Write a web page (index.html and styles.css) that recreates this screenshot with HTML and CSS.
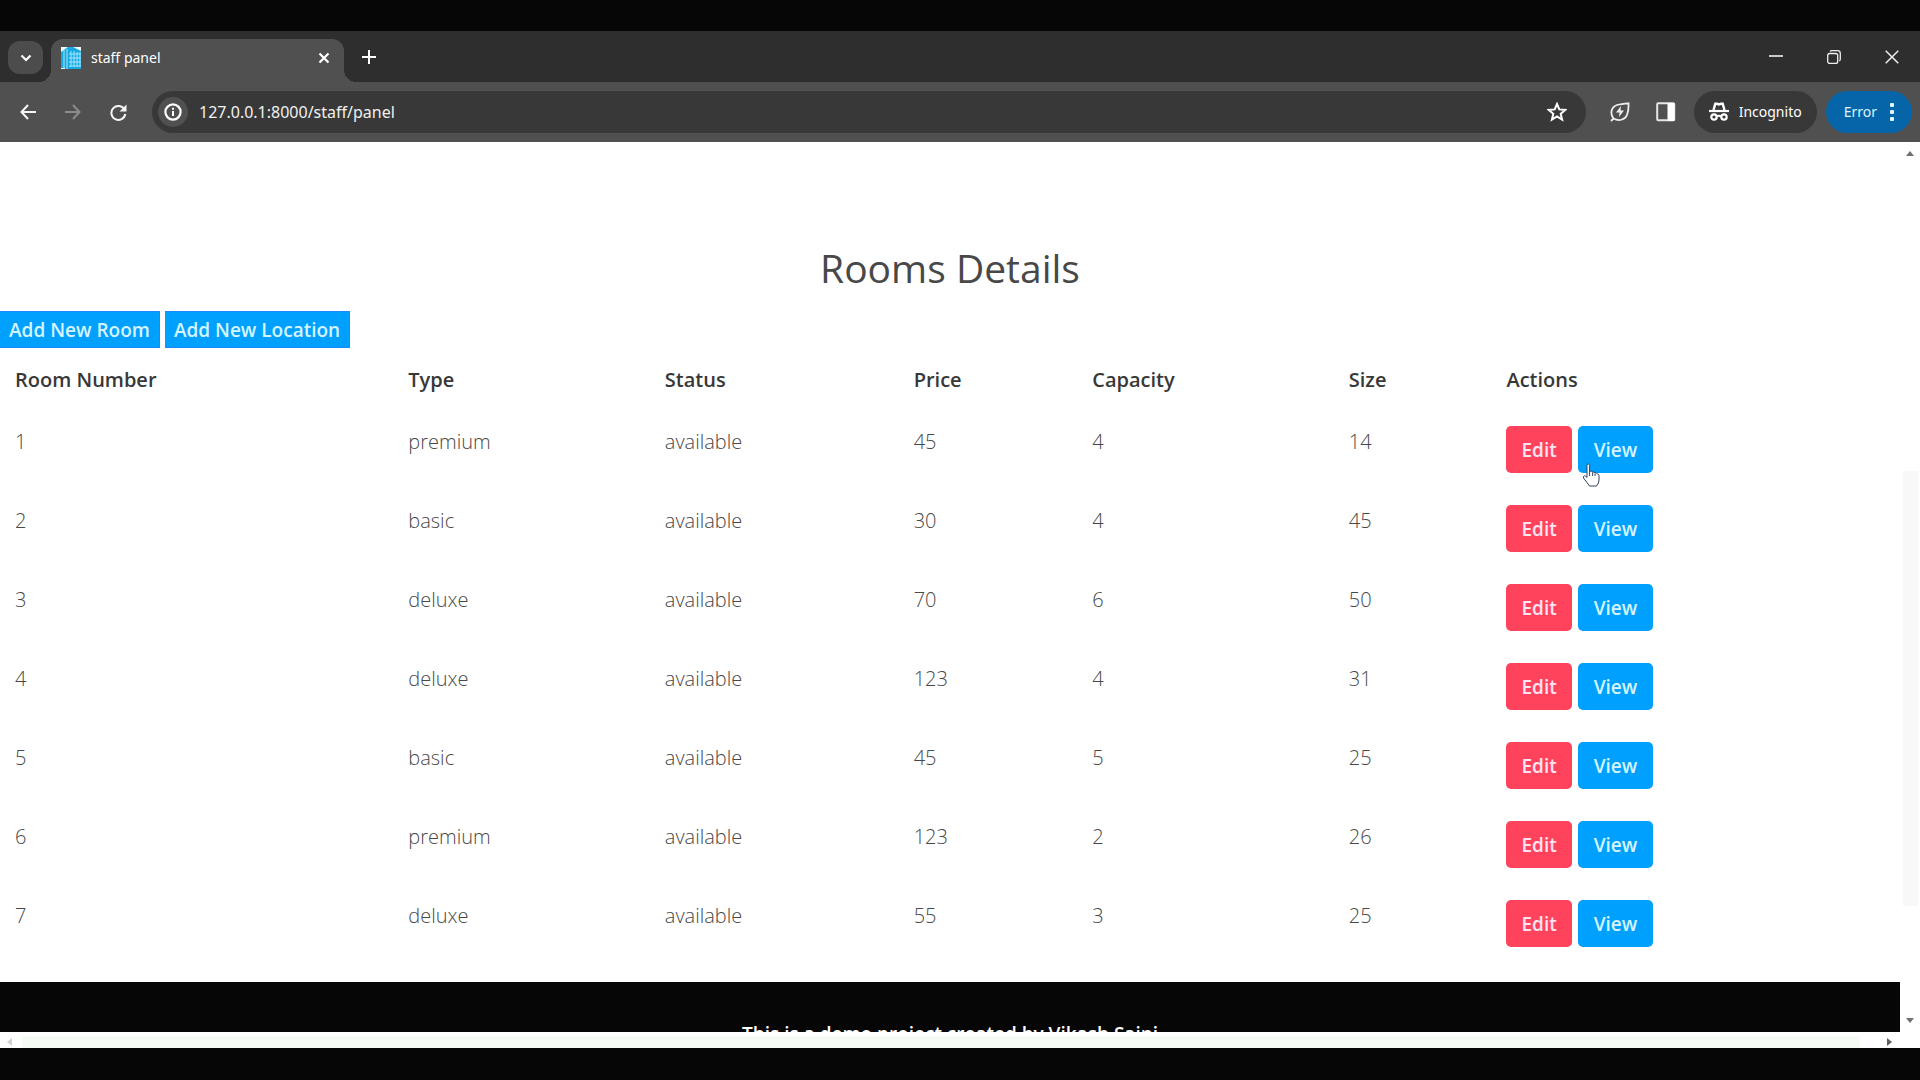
FILE: index.html
```html
<!DOCTYPE html>
<html lang="en">
<head>
<meta charset="utf-8">
<title>staff panel</title>
<link rel="stylesheet" href="styles.css">
</head>
<body>
<div class="window">
  <header class="chrome">
    <div class="tabstrip">
      <button class="tab-search" aria-label="Search tabs"><svg width="12" height="12" viewBox="0 0 12 12"><path d="M1.500 3.500L6 8l4.500-4.500" fill="none" stroke="#fff" stroke-width="2.200"/></svg></button>
      <div class="tab">
        <svg width="20" height="22" viewBox="0 0 20 22"><rect width="20" height="22" fill="#19a9e2"/><path d="M0 0h7L0 5zM12 0h8v4zM0 21h4v1H0z" fill="#eefaff"/><path d="M3 3v18M6 2v20M10 4v16M13 4v16M16 5v15M19 5v15" stroke="#a5e8ff" stroke-width="1"/><path d="M8 7h12M8 11h12M8 15h12M8 19h12" stroke="#a5e8ff" stroke-width="1"/></svg>
        <span class="tab-title">staff panel</span>
        <button class="plain" aria-label="Close tab"><svg width="12" height="12" viewBox="0 0 12 12"><path d="M1.500 1.500l9 9M10.500 1.500l-9 9" stroke="#fff" stroke-width="2.200"/></svg></button>
      </div>
      <button class="plain new-tab" aria-label="New tab"><svg width="14" height="14" viewBox="0 0 14 14"><path d="M7 0v14M0 7h14" stroke="#fff" stroke-width="2"/></svg></button>
      <div class="window-controls">
        <button class="plain" aria-label="Minimize"><svg width="14" height="14" viewBox="0 0 14 14"><path d="M0 6h14" stroke="#fff" stroke-width="1.500"/></svg></button>
        <button class="plain" aria-label="Restore"><svg width="14" height="14" viewBox="0 0 14 14" fill="none" stroke="#eee" stroke-width="1.300"><rect x="0.700" y="3.500" width="10" height="10" rx="2"/><path d="M3 1.500Q3.500.7 5 .7h5.500q2.800 0 2.800 2.800V9q0 1.500-1 2"/></svg></button>
        <button class="plain" aria-label="Close"><svg width="14" height="14" viewBox="0 0 14 14"><path d="M.7.7l12.600 12.600M13.300.7L.7 13.300" stroke="#eee" stroke-width="1.500"/></svg></button>
      </div>
    </div>
    <div class="toolbar">
      <nav class="nav">
        <button class="plain" aria-label="Back"><svg width="16" height="16" viewBox="0 0 16 16"><path d="M16 8H2M8 1L1.500 8 8 15" fill="none" stroke="#f5f5f5" stroke-width="2"/></svg></button>
        <button class="plain" aria-label="Forward"><svg width="16" height="16" viewBox="0 0 16 16"><path d="M0 8h14M8 1l6.500 7L8 15" fill="none" stroke="#8c8c8c" stroke-width="2"/></svg></button>
        <button class="plain" aria-label="Reload"><svg width="17" height="17" viewBox="0 0 17 17"><path d="M14.500 5.500A7 7 0 1 0 15.300 10" fill="none" stroke="#f5f5f5" stroke-width="2"/><path d="M16.500.5v7h-7l2.500-2.500z" fill="#f5f5f5"/></svg></button>
      </nav>
      <div class="omnibox">
        <button class="site-info" aria-label="Site information"><svg width="18" height="18" viewBox="0 0 18 18"><circle cx="9" cy="9" r="7.600" fill="none" stroke="#fff" stroke-width="2.200"/><path d="M9 8v5M9 4.800v2" stroke="#fff" stroke-width="2"/></svg></button>
        <input class="url" aria-label="Address" value="127.0.0.1:8000/staff/panel">
        <button class="plain" aria-label="Bookmark"><svg width="20" height="20" viewBox="0 0 20 20"><path d="M10 2l2.300 5.400 5.900.5-4.500 3.900 1.400 5.800-5.100-3.100-5.100 3.100 1.400-5.800L1.800 7.900l5.900-.5z" fill="none" stroke="#fff" stroke-width="2"/></svg></button>
      </div>
      <div class="extras">
        <button class="plain" aria-label="Energy saver"><svg width="20" height="20" viewBox="0 0 20 20" fill="none" stroke="#eee" stroke-width="1.800"><path d="M3.500 16.500C-.5 11 1.500 5 7 3q4-1.200 11.500-1.700C18.800 7 18.200 10 17 13c-2 5-8.500 6.500-13.500 3.500zM1 19l3-3"/><path d="M11 4L6 10.500h3.500L9 15l5-6.500h-3.500z" fill="#eee" stroke="none"/></svg></button>
        <button class="plain" aria-label="Side panel"><svg width="20" height="20" viewBox="0 0 20 20"><rect x="1.200" y="1.200" width="17" height="17" rx="1" fill="none" stroke="#e6e6e6" stroke-width="2"/><path d="M11.500 1h7v18h-7z" fill="#fff"/></svg></button>
      </div>
      <button class="pill"><svg width="20" height="20" viewBox="0 0 20 20"><path d="M0 9h20" stroke="#fff" stroke-width="2.200"/><path d="M4.500 8L6.300 1.800H8L10 2.500l2-.7h1.700L15.500 8" fill="none" stroke="#fff" stroke-width="2.400"/><circle cx="5" cy="15" r="2.700" fill="none" stroke="#fff" stroke-width="2.200"/><circle cx="15" cy="15" r="2.700" fill="none" stroke="#fff" stroke-width="2.200"/><path d="M7.500 14.500q2.500-1.500 5 0" fill="none" stroke="#fff" stroke-width="2"/></svg>Incognito</button>
      <button class="pill pill-error">Error<svg width="4" height="18" viewBox="0 0 4 18" fill="#dff3ff"><rect width="4" height="4" rx="1"/><rect y="7" width="4" height="4" rx="1"/><rect y="14" width="4" height="4" rx="1"/></svg></button>
    </div>
  </header>

  <div class="viewport">
    <main class="page">
      <h1>Rooms Details</h1>
      <div class="add-actions">
        <button class="add">Add New Room</button>
        <button class="add">Add New Location</button>
      </div>
      <table class="rooms">
        <colgroup><col class="c-number"><col class="c-type"><col class="c-status"><col class="c-price"><col class="c-capacity"><col class="c-size"><col></colgroup>
        <thead><tr><th>Room Number</th><th>Type</th><th>Status</th><th>Price</th><th>Capacity</th><th>Size</th><th>Actions</th></tr></thead>
        <tbody>
          <tr><td>1</td><td>premium</td><td>available</td><td>45</td><td>4</td><td>14</td><td><div class="row-actions"><a class="btn edit" href="#">Edit</a><a class="btn view" href="#">View</a>
            <svg class="cursor" width="18" height="24" viewBox="0 0 18 24"><path d="M5 14V2.500q0-1.500 1.300-1.500t1.300 1.500V9l1-1q1.600-.5 2 1.200 1.700-.8 2.400.7 1.600-.6 2.300.9 1.700.2 1.700 2V17q0 3-2.500 6H7.500Q5 19.500 1.500 15q-.7-1.800 1-2.200 1.300.2 2.500 1.700z" fill="#fff" stroke="#33435e" stroke-width="1"/><path d="M7.600 9v4M10.600 9.500V13M13 10.500V13" stroke="#33435e"/></svg></div></td></tr>
          <tr><td>2</td><td>basic</td><td>available</td><td>30</td><td>4</td><td>45</td><td><div class="row-actions"><a class="btn edit" href="#">Edit</a><a class="btn view" href="#">View</a></div></td></tr>
          <tr><td>3</td><td>deluxe</td><td>available</td><td>70</td><td>6</td><td>50</td><td><div class="row-actions"><a class="btn edit" href="#">Edit</a><a class="btn view" href="#">View</a></div></td></tr>
          <tr><td>4</td><td>deluxe</td><td>available</td><td>123</td><td>4</td><td>31</td><td><div class="row-actions"><a class="btn edit" href="#">Edit</a><a class="btn view" href="#">View</a></div></td></tr>
          <tr><td>5</td><td>basic</td><td>available</td><td>45</td><td>5</td><td>25</td><td><div class="row-actions"><a class="btn edit" href="#">Edit</a><a class="btn view" href="#">View</a></div></td></tr>
          <tr><td>6</td><td>premium</td><td>available</td><td>123</td><td>2</td><td>26</td><td><div class="row-actions"><a class="btn edit" href="#">Edit</a><a class="btn view" href="#">View</a></div></td></tr>
          <tr><td>7</td><td>deluxe</td><td>available</td><td>55</td><td>3</td><td>25</td><td><div class="row-actions"><a class="btn edit" href="#">Edit</a><a class="btn view" href="#">View</a></div></td></tr>
        </tbody>
      </table>
      <footer class="footer">This is a demo project created by Vikash Saini</footer>
    </main>
    <div class="vbar">
      <svg width="8" height="5" viewBox="0 0 8 5"><path d="M0 5l4-5 4 5z" fill="#707070"/></svg>
      <div class="vtrack"><div class="vthumb"></div></div>
      <svg width="8" height="5" viewBox="0 0 8 5"><path d="M0 0l4 5 4-5z" fill="#707070"/></svg>
    </div>
    <div class="hbar">
      <svg width="5" height="8" viewBox="0 0 5 8"><path d="M5 0L0 4l5 4z" fill="#ccd6cc"/></svg>
      <div class="hthumb"></div>
      <svg width="5" height="8" viewBox="0 0 5 8"><path d="M0 0l5 4-5 4z" fill="#606060"/></svg>
    </div>
  </div>
</div>
</body>
</html>
```
FILE: styles.css
```css
* { box-sizing: border-box; }
body { margin: 0; background: #060606; font-family: "Open Sans", "Noto Sans", sans-serif; }
button, input { font: inherit; }
button { cursor: pointer; }

.window { display: flex; flex-direction: column; height: 100vh; padding: 31px 0 32px; }

/* browser frame */
.chrome { background: #505050; color: #fff; font-family: "Noto Sans", "Open Sans", sans-serif; }
.plain { display: flex; padding: 0; border: 0; background: none; }
.tabstrip { display: flex; height: 51px; padding-left: 8px; background: #2e2e2e; }
.tab-search { display: flex; align-items: center; justify-content: center; width: 35px; height: 33px; margin-top: 10px; padding: 0; border: 0; border-radius: 12px; background: #4c4c4c; }
.tab { position: relative; display: flex; align-items: center; gap: 10px; width: 293px; margin: 8px 0 0 8px; padding: 0 14px 6px 10px; border-radius: 12px 12px 0 0; background: #505050; font-size: 14px; line-height: 20px; }
.tab::before, .tab::after { content: ""; position: absolute; bottom: 0; width: 12px; height: 12px; }
.tab::before { right: 100%; background: radial-gradient(circle at 0 0, #2e2e2e 12px, #505050 12px); }
.tab::after { left: 100%; background: radial-gradient(circle at 100% 0, #2e2e2e 12px, #505050 12px); }
.tab-title { flex: 1; }
.new-tab { align-items: center; margin-left: 18px; }
.window-controls { display: flex; gap: 44px; margin-left: auto; padding-right: 21px; }
.window-controls .plain { align-items: center; }

.toolbar { display: flex; align-items: center; height: 60px; padding: 0 8px 0 20px; }
.nav { display: flex; align-items: center; gap: 29px; }
.omnibox { display: flex; align-items: center; flex: 1; height: 42px; margin-left: 25px; padding: 0 19px 0 6px; border-radius: 21px; background: #383838; }
.site-info { display: flex; align-items: center; justify-content: center; width: 30px; height: 30px; padding: 0; border: 0; border-radius: 50%; background: #505050; }
.url { flex: 1; min-width: 0; padding: 0; margin-left: 11px; border: 0; outline: 0; background: none; color: #f0f0f0; font-size: 16px; line-height: 24px; }
.extras { display: flex; gap: 26px; margin: 0 18px 0 24px; }
.pill { display: flex; align-items: center; gap: 10px; height: 42px; padding: 0 15px; border: 0; border-radius: 21px; background: #383838; color: #fff; font-size: 14px; line-height: 20px; }
.pill-error { gap: 13px; margin-left: 9px; padding: 0 18px; background: #0565a8; color: #dff3ff; }

/* page area and scroll bars */
.viewport { display: grid; grid-template: minmax(0, 1fr) 16px / minmax(0, 1fr) 20px; flex: 1; min-height: 0; background: #fff; }
.page { overflow: hidden; padding-top: 102px; color: #444; font-size: 20px; line-height: 32px; }
.vbar { display: flex; flex-direction: column; align-items: center; padding: 9px 0; }
.vtrack { display: flex; flex-direction: column; flex: 1; width: 15px; padding: 315px 0 112px; }
.vthumb { flex: 1; background: #f8f8f8; }
.hbar { grid-column: 1 / -1; display: flex; align-items: center; gap: 10px; padding: 4px 28px 0 7px; }
.hthumb { flex: 1; height: 12px; margin-right: 17px; background: #f7fbf6; }

h1 { margin: 0 0 19px; color: #484848; font-size: 39px; font-weight: 400; line-height: 48px; text-align: center; }
.add-actions { display: flex; gap: 5px; }
.add { height: 37px; padding: 0 9px; border: 1px solid #1a88ff; border-left-width: 0; background: #00a0ff; color: #d5f6ff; font-size: 19px; font-weight: 600; line-height: 32px; }
.rooms { width: 100%; border-collapse: collapse; table-layout: fixed; }
.rooms th, .rooms td { padding: 16px 0 16px 15px; text-align: left; vertical-align: top; }
.rooms th { padding-bottom: 14px; color: #383838; font-weight: 600; }
.rooms td { color: #484848; font-weight: 300; }
.c-number { width: 20.7%; }
.c-type { width: 13.5%; }
.c-status { width: 13.1%; }
.c-price { width: 9.4%; }
.c-capacity { width: 13.5%; }
.c-size { width: 8.3%; }
.row-actions { position: relative; display: flex; gap: 6px; }
.btn { height: 47px; padding: 8px 15px; border-radius: 5px; font-size: 19px; font-weight: 600; text-decoration: none; }
.edit { background: #ff435c; color: #ffe4f2; }
.view { padding: 8px 16px; background: #00a0ff; color: #d5f6ff; }
.cursor { position: absolute; left: 76px; top: 37px; }
.footer { margin-top: 19px; padding: 36px 0; background: #060606; color: #fff; font-size: 19px; font-weight: 600; text-align: center; }
```
